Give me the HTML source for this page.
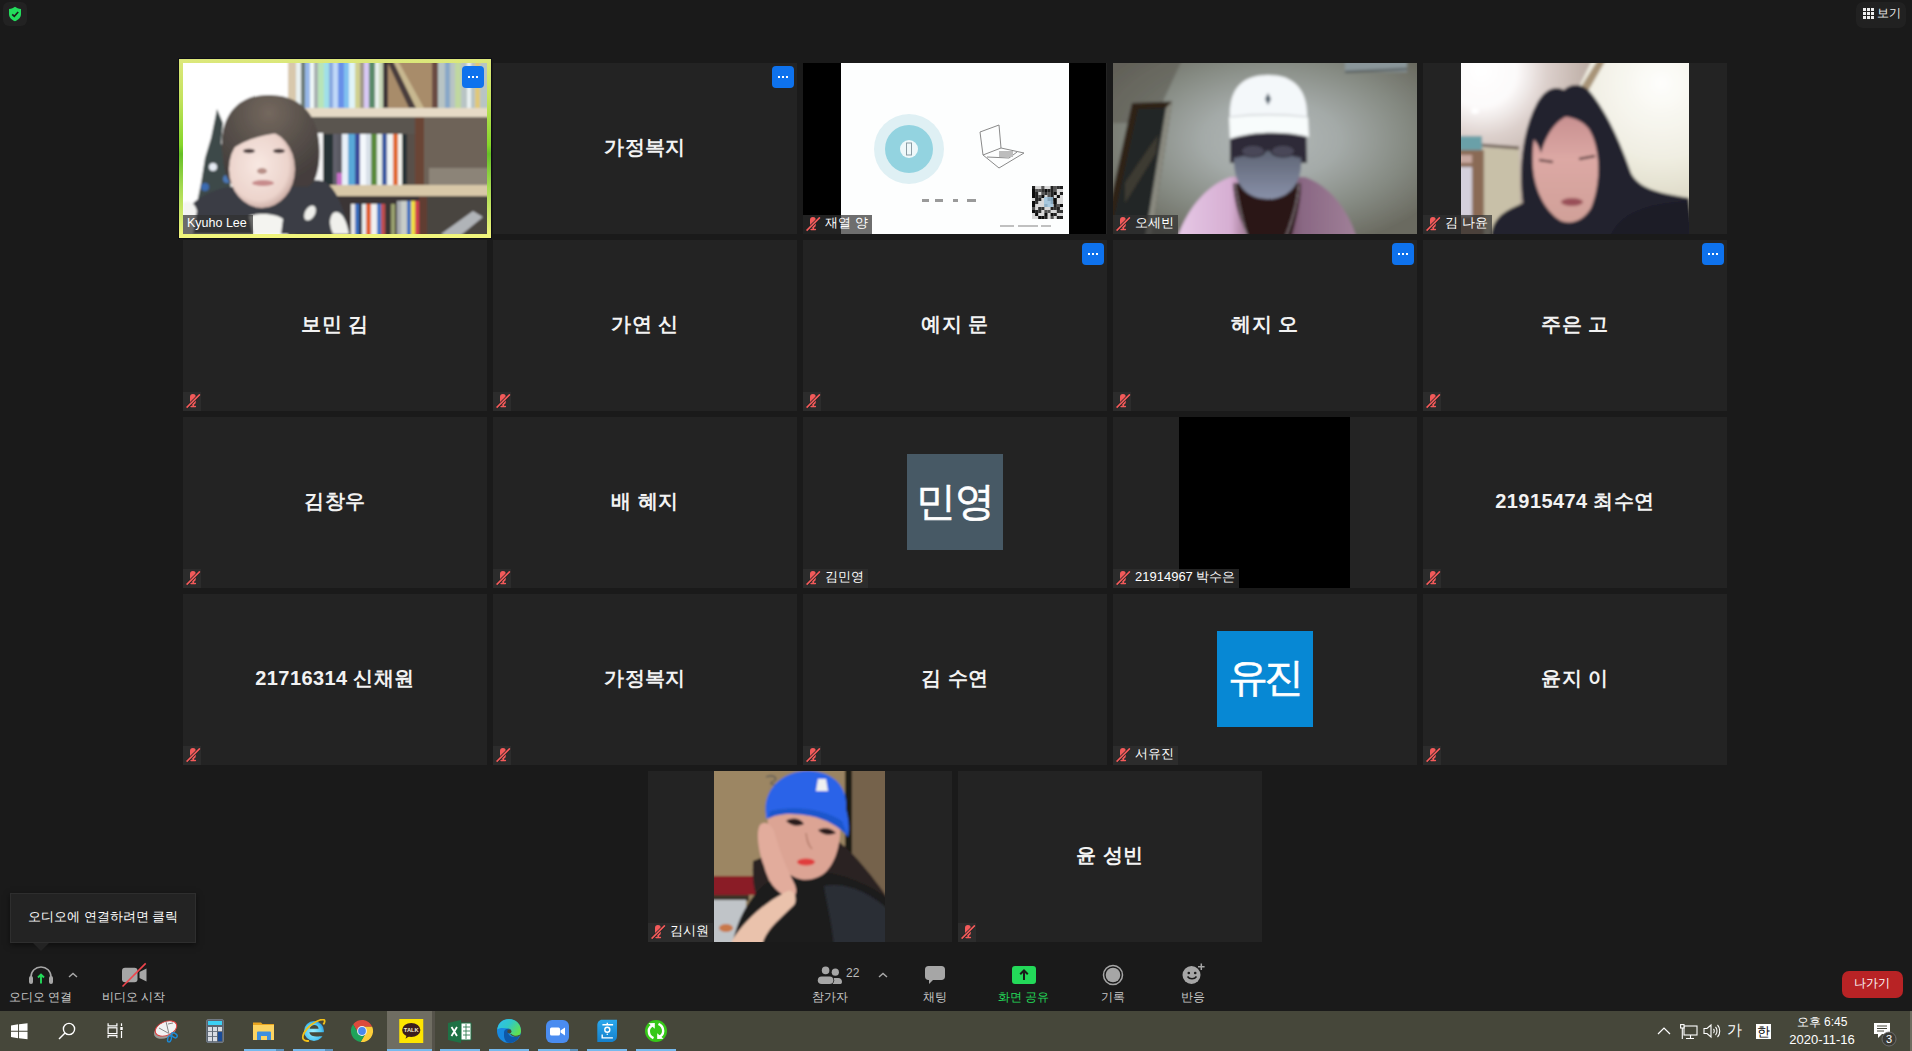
<!DOCTYPE html>
<html><head><meta charset="utf-8">
<style>
html,body{margin:0;padding:0;width:1912px;height:1051px;overflow:hidden;background:#1a1a1a;font-family:"Liberation Sans",sans-serif;}
.a{position:absolute}
.t{position:absolute;width:304px;height:171px;background:#232323;overflow:hidden}
.nm{position:absolute;left:0;right:0;top:72px;text-align:center;color:#f2f2f2;font-size:20px;font-weight:bold;line-height:24px;letter-spacing:0.4px}
.mic{position:absolute;left:0;top:152px;width:18px;height:19px;background:rgba(48,48,48,.7)}
.lbl{position:absolute;left:0;top:152px;height:19px;background:rgba(48,48,48,.7);color:#fff;font-size:13px;line-height:16px;padding:0 4px 0 22px;white-space:nowrap}
.more{position:absolute;left:279px;top:3px;width:22px;height:22px;border-radius:4px;background:#0e72ed}
.more:after{content:"";position:absolute;left:6px;top:10px;width:2px;height:2px;background:#fff;box-shadow:4px 0 #fff,8px 0 #fff}
.lb{font-size:12px;line-height:18px;color:#c8c8c8;white-space:nowrap}
.mi{position:absolute;left:3px;top:2px;width:15px;height:15px}
</style></head><body>
<div class="a" style="left:179px;top:59px;width:312px;height:179px;background:linear-gradient(#dde87c 0%,#c4e25e 22%,#86d62a 48%,#66bf26 53%,#a6da52 72%,#f4f67e 100%);box-shadow:0 0 0 1px #0e0e16"></div>
<div class="t" style="left:183px;top:63px"><svg class="a" style="left:0;top:0" width="304" height="171" viewBox="0 0 304 171">
<defs><filter id="bk" x="-5%" y="-5%" width="110%" height="110%"><feGaussianBlur stdDeviation="0.9"/></filter>
<radialGradient id="kf" cx="0.45" cy="0.45" r="0.6"><stop offset="0" stop-color="#f8e8e2"/><stop offset="0.75" stop-color="#ecd4cc"/><stop offset="1" stop-color="#c0a098"/></radialGradient><radialGradient id="kh" gradientUnits="userSpaceOnUse" cx="86" cy="50" r="70"><stop offset="0" stop-color="#74685e"/><stop offset="0.5" stop-color="#5a524c"/><stop offset="1" stop-color="#443e3c"/></radialGradient></defs>
<rect x="0" y="0" width="304" height="171" fill="#ffffff"/>
<g filter="url(#bk)">
<rect x="-6" y="-6" width="316" height="183" fill="#ffffff"/>
<rect x="105" y="-6" width="205" height="183" fill="#5a5048"/>
<rect x="105" y="-6" width="8" height="177" fill="#d8c8ac"/>
<g>
<rect x="113" y="-6" width="5" height="51" fill="#e8f0f0"/><rect x="118" y="-6" width="4" height="51" fill="#6a7a74"/><rect x="122" y="-6" width="5" height="51" fill="#98b8e8"/><rect x="127" y="-6" width="4" height="51" fill="#f0f8f8"/><rect x="131" y="-6" width="4" height="51" fill="#a8b0b0"/><rect x="135" y="-6" width="6" height="51" fill="#b8e4b8"/><rect x="141" y="-6" width="5" height="51" fill="#a0e0e8"/><rect x="146" y="-6" width="4" height="51" fill="#88a8e0"/><rect x="150" y="-6" width="5" height="51" fill="#c0d8f8"/><rect x="155" y="-6" width="6" height="51" fill="#6890e8"/><rect x="161" y="-6" width="5" height="51" fill="#80c0f0"/><rect x="166" y="-6" width="6" height="51" fill="#e0f4f8"/><rect x="172" y="-6" width="5" height="51" fill="#d0d090"/><rect x="177" y="-6" width="4" height="51" fill="#a09888"/><rect x="181" y="-6" width="5" height="51" fill="#d8c8f4"/><rect x="186" y="-6" width="6" height="51" fill="#5a8a6a"/><rect x="192" y="-6" width="4" height="51" fill="#e8f0ec"/><rect x="196" y="-6" width="4" height="51" fill="#c8d8b8"/><rect x="200" y="-6" width="5" height="51" fill="#3e3438"/>
<rect x="205" y="-6" width="46" height="51" fill="#a88c6a"/><path d="M204 -2 L210 -4 L238 45 L226 45Z" fill="#4a3e3c"/><path d="M209 -4 L214 -4 L241 45 L233 45Z" fill="#c8b890"/>
<rect x="249" y="-6" width="6" height="51" fill="#6a4c42"/>
<rect x="255" y="-6" width="55" height="51" fill="#b8c4c4"/><rect x="262" y="-6" width="5" height="51" fill="#88a8c8"/><rect x="272" y="-6" width="6" height="51" fill="#c0d8a0"/><rect x="284" y="-6" width="4" height="51" fill="#e8f0f0"/><rect x="292" y="-6" width="5" height="51" fill="#e0c878"/>
</g>
<rect x="105" y="45" width="205" height="9" fill="#e6dac6"/>
<rect x="113" y="54" width="197" height="17" fill="#5a5450"/>
<g>
<rect x="113" y="71" width="15" height="52" fill="#4a4440"/>
<rect x="128" y="71" width="22" height="52" fill="#283034"/><rect x="134" y="95" width="6" height="14" fill="#f0f0d8"/>
<rect x="150" y="71" width="4" height="52" fill="#60606a"/><rect x="154" y="110" width="5" height="13" fill="#c870c8"/><rect x="154" y="71" width="5" height="39" fill="#5a5a64"/>
<rect x="159" y="71" width="6" height="52" fill="#e8f0f8"/><rect x="165" y="71" width="7" height="52" fill="#58a8d8"/><rect x="172" y="71" width="5" height="52" fill="#3a4a98"/><rect x="177" y="71" width="6" height="52" fill="#f4f8fc"/><rect x="183" y="71" width="5" height="52" fill="#d8e0e8"/><rect x="188" y="71" width="6" height="52" fill="#5a8a3a"/><rect x="194" y="71" width="5" height="52" fill="#e8f0e8"/><rect x="199" y="71" width="5" height="52" fill="#3a5aa0"/><rect x="204" y="71" width="6" height="52" fill="#f0f4f4"/><rect x="210" y="71" width="5" height="52" fill="#e06a30"/><rect x="215" y="71" width="4" height="52" fill="#f4f4ee"/><rect x="219" y="71" width="5" height="52" fill="#283034"/><rect x="224" y="71" width="8" height="52" fill="#58504a"/>
</g>
<rect x="232" y="54" width="9" height="70" fill="#6a4436"/>
<rect x="241" y="54" width="69" height="69" fill="#6e6458"/>
<rect x="246" y="105" width="60" height="18" fill="#8c8478"/>
<rect x="105" y="122" width="205" height="11" fill="#d8c8a8"/>
<rect x="113" y="133" width="197" height="44" fill="#3a3634"/>
<g>
<rect x="168" y="141" width="4" height="36" fill="#e8e8e8"/><rect x="172" y="141" width="4" height="36" fill="#3a70c0"/><rect x="176" y="141" width="3" height="36" fill="#282830"/><rect x="179" y="141" width="4" height="36" fill="#e8eef0"/><rect x="183" y="141" width="5" height="36" fill="#e06030"/><rect x="188" y="141" width="6" height="36" fill="#f0f0f0"/><rect x="194" y="141" width="4" height="36" fill="#3a78c8"/><rect x="198" y="141" width="4" height="36" fill="#c05050"/><rect x="208" y="141" width="4" height="36" fill="#9aa070"/><rect x="214" y="138" width="4" height="39" fill="#a8acb0"/><rect x="218" y="138" width="6" height="39" fill="#c8ccc8"/><rect x="224" y="138" width="4" height="39" fill="#3a70c0"/><rect x="228" y="138" width="4" height="39" fill="#f0e040"/><rect x="232" y="138" width="4" height="39" fill="#d04050"/>
</g>
<rect x="236" y="133" width="8" height="44" fill="#603c30"/>
<rect x="244" y="133" width="66" height="44" fill="#4a4440"/>
<path d="M258 171 L290 148 L300 154 L272 177Z" fill="#b0b4b8"/>
<rect x="130" y="70" width="10" height="52" fill="#f4f4f4"/>
<path d="M34 46 L40 60 L38 80 L46 100 L48 130 L50 171 L8 171 L12 150 L18 120 L22 95 L28 75 Z" fill="#3e4a48"/>
<circle cx="22" cy="124" r="4" fill="#3a6ab0"/><circle cx="44" cy="116" r="4" fill="#4a78b8"/><circle cx="30" cy="104" r="4" fill="#e6ecf4"/><circle cx="36" cy="146" r="8" fill="#f0f4f8"/><circle cx="16" cy="150" r="4" fill="#3a6ab0"/>
<path d="M0 171 L6 145 C12 136 28 127 45 124 L110 120 C125 117 136 116 143 119 C152 126 160 140 167 171Z" fill="#3a3c44"/>
<path d="M40 95 C34 60 50 30 88 32 C124 33 140 60 136 100 C134 115 130 122 124 124 L50 122 C44 118 41 108 40 95Z" fill="url(#kh)"/>

<ellipse cx="79" cy="106" rx="33" ry="39" fill="url(#kf)"/>
<path d="M44 90 C46 55 70 45 95 48 C120 50 132 70 128 96 C120 80 110 72 95 70 C80 72 60 76 44 90Z" fill="url(#kh)"/>
<ellipse cx="66" cy="88" rx="6" ry="2.2" fill="#4a3a3a"/><ellipse cx="96" cy="88" rx="6" ry="2.2" fill="#4a3a3a"/>
<ellipse cx="79" cy="108" rx="5" ry="3" fill="#b89088"/>
<ellipse cx="80" cy="120" rx="11" ry="3" fill="#c88c8c"/>
<path d="M66 153 C76 150 92 150 100 156 L98 171 L70 171Z" fill="#f4f4f0"/>
<ellipse cx="127" cy="150" rx="5" ry="8" transform="rotate(30 127 150)" fill="#eeeeea"/>
<path d="M150 150 C158 145 164 158 166 171 L150 171 C146 162 146 155 150 150Z" fill="#f0f0ec"/>
<path d="M0 171 L0 140 C6 136 12 140 14 148 L10 171Z" fill="#f4f4f2"/>
</g>
</svg>
<div class="lbl" style="padding-left:4px;padding-right:6px;font-size:12.5px;background:rgba(48,48,48,.7)">Kyuho Lee</div><div class="more"></div></div>
<div class="t" style="left:493px;top:63px"><div class="nm">가정복지</div><div class="more"></div></div>
<div class="t" style="left:803px;top:63px"><svg class="a" style="left:0;top:0" width="303" height="171" viewBox="0 0 303 171">
<defs><filter id="sl" x="-5%" y="-5%" width="110%" height="110%"><feGaussianBlur stdDeviation="0.7"/></filter></defs>
<rect width="304" height="171" fill="#000"/>
<g filter="url(#sl)">
<rect x="38" y="0" width="228" height="171" fill="#fdfefe"/>
<circle cx="106" cy="86" r="35" fill="#dff0f4"/>
<circle cx="106" cy="86" r="24" fill="#93d3e0"/>
<circle cx="106" cy="86" r="9" fill="#eef8fa"/>
<rect x="103.5" y="80" width="5" height="12" fill="none" stroke="#8a9ca4" stroke-width="1"/>
<g stroke="#8a8a8a" stroke-width="1" fill="none"><path d="M177 69 L196 62 L198 85 L180 92Z"/><path d="M180 92 L196 105 L221 90 L198 85"/><path d="M184 94 L206 95 L214 89"/></g>
<g fill="#9a9a9a"><rect x="196" y="88" width="14" height="6" fill="#bdbdbd"/></g>
<rect x="229" y="123" width="31" height="33" fill="#d8d8d8"/><rect x="229.0" y="123.0" width="3.1" height="3" fill="#222"/><rect x="229.0" y="126.0" width="3.1" height="3" fill="#111"/><rect x="229.0" y="129.0" width="3.1" height="3" fill="#111"/><rect x="229.0" y="132.0" width="3.1" height="3" fill="#111"/><rect x="229.0" y="138.0" width="3.1" height="3" fill="#111"/><rect x="229.0" y="141.0" width="3.1" height="3" fill="#111"/><rect x="229.0" y="144.0" width="3.1" height="3" fill="#555"/><rect x="229.0" y="147.0" width="3.1" height="3" fill="#111"/><rect x="232.1" y="126.0" width="3.1" height="3" fill="#555"/><rect x="232.1" y="129.0" width="3.1" height="3" fill="#222"/><rect x="232.1" y="132.0" width="3.1" height="3" fill="#222"/><rect x="232.1" y="135.0" width="3.1" height="3" fill="#222"/><rect x="232.1" y="138.0" width="3.1" height="3" fill="#333"/><rect x="232.1" y="147.0" width="3.1" height="3" fill="#222"/><rect x="232.1" y="150.0" width="3.1" height="3" fill="#111"/><rect x="235.2" y="126.0" width="3.1" height="3" fill="#555"/><rect x="235.2" y="132.0" width="3.1" height="3" fill="#555"/><rect x="235.2" y="135.0" width="3.1" height="3" fill="#222"/><rect x="235.2" y="144.0" width="3.1" height="3" fill="#333"/><rect x="235.2" y="147.0" width="3.1" height="3" fill="#333"/><rect x="235.2" y="153.0" width="3.1" height="3" fill="#111"/><rect x="238.3" y="123.0" width="3.1" height="3" fill="#555"/><rect x="238.3" y="126.0" width="3.1" height="3" fill="#333"/><rect x="238.3" y="129.0" width="3.1" height="3" fill="#555"/><rect x="238.3" y="132.0" width="3.1" height="3" fill="#111"/><rect x="238.3" y="144.0" width="3.1" height="3" fill="#333"/><rect x="238.3" y="153.0" width="3.1" height="3" fill="#111"/><rect x="241.4" y="126.0" width="3.1" height="3" fill="#111"/><rect x="241.4" y="129.0" width="3.1" height="3" fill="#333"/><rect x="241.4" y="141.0" width="3.1" height="3" fill="#555"/><rect x="241.4" y="147.0" width="3.1" height="3" fill="#555"/><rect x="241.4" y="150.0" width="3.1" height="3" fill="#111"/><rect x="241.4" y="153.0" width="3.1" height="3" fill="#222"/><rect x="244.5" y="126.0" width="3.1" height="3" fill="#222"/><rect x="244.5" y="129.0" width="3.1" height="3" fill="#555"/><rect x="244.5" y="132.0" width="3.1" height="3" fill="#555"/><rect x="244.5" y="135.0" width="3.1" height="3" fill="#333"/><rect x="244.5" y="147.0" width="3.1" height="3" fill="#555"/><rect x="247.6" y="123.0" width="3.1" height="3" fill="#222"/><rect x="247.6" y="126.0" width="3.1" height="3" fill="#222"/><rect x="247.6" y="129.0" width="3.1" height="3" fill="#222"/><rect x="247.6" y="132.0" width="3.1" height="3" fill="#222"/><rect x="247.6" y="135.0" width="3.1" height="3" fill="#111"/><rect x="247.6" y="138.0" width="3.1" height="3" fill="#333"/><rect x="247.6" y="144.0" width="3.1" height="3" fill="#222"/><rect x="247.6" y="150.0" width="3.1" height="3" fill="#111"/><rect x="247.6" y="153.0" width="3.1" height="3" fill="#555"/><rect x="250.7" y="123.0" width="3.1" height="3" fill="#555"/><rect x="250.7" y="126.0" width="3.1" height="3" fill="#555"/><rect x="250.7" y="129.0" width="3.1" height="3" fill="#111"/><rect x="250.7" y="135.0" width="3.1" height="3" fill="#111"/><rect x="250.7" y="138.0" width="3.1" height="3" fill="#111"/><rect x="250.7" y="141.0" width="3.1" height="3" fill="#222"/><rect x="250.7" y="144.0" width="3.1" height="3" fill="#333"/><rect x="250.7" y="150.0" width="3.1" height="3" fill="#222"/><rect x="253.8" y="123.0" width="3.1" height="3" fill="#333"/><rect x="253.8" y="132.0" width="3.1" height="3" fill="#111"/><rect x="253.8" y="141.0" width="3.1" height="3" fill="#555"/><rect x="253.8" y="144.0" width="3.1" height="3" fill="#222"/><rect x="253.8" y="147.0" width="3.1" height="3" fill="#333"/><rect x="253.8" y="153.0" width="3.1" height="3" fill="#222"/><rect x="256.9" y="123.0" width="3.1" height="3" fill="#222"/><rect x="256.9" y="129.0" width="3.1" height="3" fill="#222"/><rect x="256.9" y="141.0" width="3.1" height="3" fill="#111"/><rect x="256.9" y="147.0" width="3.1" height="3" fill="#333"/><rect x="256.9" y="153.0" width="3.1" height="3" fill="#222"/><rect x="241" y="134" width="9" height="10" fill="#9cc4e0" opacity="0.8"/>
<g fill="#9a9a9a"><rect x="119" y="136" width="7" height="3"/><rect x="132" y="136" width="8" height="3"/><rect x="150" y="136" width="5" height="3"/><rect x="164" y="136" width="9" height="3"/></g>
<g fill="#c0c0c0"><rect x="197" y="162" width="14" height="2"/><rect x="215" y="162" width="20" height="2"/><rect x="238" y="162" width="10" height="2"/></g>
</g>
</svg>
<div class="lbl"><svg class="mi" viewBox="0 0 15 15"><rect x="4" y="0" width="5.8" height="10.6" rx="2.9" fill="#f35a5a"/><rect x="4.3" y="11.7" width="5.8" height="1.5" rx="0.7" fill="#f35a5a"/><rect x="6.4" y="10" width="1.6" height="2" fill="#f35a5a"/><path d="M0.6 13.6 L13.9 0.4" stroke="#1d2222" stroke-width="3"/><path d="M0.6 13.6 L13.9 0.4" stroke="#f35a5a" stroke-width="1.7"/></svg>재열 양</div></div>
<div class="t" style="left:1113px;top:63px"><svg class="a" style="left:0;top:0" width="304" height="171" viewBox="0 0 304 171">
<defs><filter id="ob" x="-5%" y="-5%" width="110%" height="110%"><feGaussianBlur stdDeviation="1.6"/></filter>
<radialGradient id="ow" cx="0.52" cy="0.45" r="0.62"><stop offset="0" stop-color="#b2b8b8"/><stop offset="0.35" stop-color="#a4aaa8"/><stop offset="0.7" stop-color="#858a82"/><stop offset="1" stop-color="#6a6a60"/></radialGradient>
<linearGradient id="osh" x1="0" y1="0" x2="1" y2="0"><stop offset="0" stop-color="#e6c8e6"/><stop offset="0.3" stop-color="#d6aed2"/><stop offset="0.5" stop-color="#5a3444"/><stop offset="0.7" stop-color="#8a6884"/><stop offset="1" stop-color="#a08098"/></linearGradient>
<linearGradient id="omk" x1="0" y1="0" x2="0" y2="1"><stop offset="0" stop-color="#5e6474"/><stop offset="1" stop-color="#8890a8"/></linearGradient></defs>
<rect x="0" y="0" width="304" height="171" fill="#858a82"/>
<g filter="url(#ob)">
<rect x="-5" y="-5" width="314" height="181" fill="url(#ow)"/>
<path d="M-5 -5 L70 -5 L40 60 L-5 60Z" fill="#5e5c54" opacity="0.6"/>
<rect x="232" y="-3" width="62" height="12" fill="#8a969a"/>
<path d="M232 9 L294 6" stroke="#4e5456" stroke-width="2"/>
<path d="M19 40 L59 38.5 L38 176 L-5 176 L-5 150Z" fill="#2e2214"/>
<path d="M25 46 L53 45 L35 176 L2 176 L2 150Z" fill="#242628"/>
<path d="M12 120 L45 72 L43 90 L12 140Z" fill="#3e3a30"/>
<path d="M53 45 L59 38.5 L38 176 L32 176Z" fill="#8a8a80"/>
<path d="M64 176 C72 150 92 122 118 114 L192 114 C215 122 235 145 244 176Z" fill="url(#osh)"/>
<path d="M120 120 C122 150 132 165 135 176 L178 176 C182 160 188 140 188 120Z" fill="#2a1418"/>
<path d="M117 58 L193 58 L194 100 L117 100Z" fill="#2e2a38"/>
<path d="M121 95 C135 92 145 89 155 88 C165 89 175 92 188 95 C190 118 178 136 155 136 C132 136 120 120 121 95Z" fill="url(#omk)"/>
<ellipse cx="140" cy="88" rx="12" ry="6" fill="#4a4658" stroke="#22202a" stroke-width="1.2"/>
<ellipse cx="170" cy="88" rx="12" ry="6" fill="#4a4658" stroke="#22202a" stroke-width="1.2"/>
<path d="M117 56 C115 25 130 12 155 12 C180 12 195 25 194 56Z" fill="#f4f8fa"/>
<path d="M116 54 C140 50 170 50 195 54 L196 74 C172 68 140 68 117 76Z" fill="#f8fcfc"/>
<path d="M117 54 C140 51 170 51 195 54" stroke="#c8ccd0" stroke-width="1.2" fill="none"/>
<path d="M155 30 L158 36 L155 42 L152 36Z" fill="#4a5a66"/>
<path d="M122 120 C125 140 130 160 135 176 M186 120 C185 140 178 160 172 176" stroke="#c8c0c8" stroke-width="0.8" fill="none"/>
</g>
</svg>
<div class="lbl"><svg class="mi" viewBox="0 0 15 15"><rect x="4" y="0" width="5.8" height="10.6" rx="2.9" fill="#f35a5a"/><rect x="4.3" y="11.7" width="5.8" height="1.5" rx="0.7" fill="#f35a5a"/><rect x="6.4" y="10" width="1.6" height="2" fill="#f35a5a"/><path d="M0.6 13.6 L13.9 0.4" stroke="#1d2222" stroke-width="3"/><path d="M0.6 13.6 L13.9 0.4" stroke="#f35a5a" stroke-width="1.7"/></svg>오세빈</div></div>
<div class="t" style="left:1423px;top:63px"><svg class="a" style="left:38px;top:0" width="228" height="171" viewBox="0 0 228 171">
<defs><filter id="nb" x="-5%" y="-5%" width="110%" height="110%"><feGaussianBlur stdDeviation="1.6"/></filter>
<radialGradient id="nl" gradientUnits="userSpaceOnUse" cx="20" cy="8" r="120"><stop offset="0" stop-color="#ffffff"/><stop offset="0.3" stop-color="#fcfafa"/><stop offset="0.55" stop-color="#dcd0cc"/><stop offset="1" stop-color="#b4a49a"/></radialGradient>
<radialGradient id="nw" gradientUnits="userSpaceOnUse" cx="200" cy="20" r="150"><stop offset="0" stop-color="#fefefc"/><stop offset="0.5" stop-color="#f0eee2"/><stop offset="1" stop-color="#d0ccb4"/></radialGradient>
<linearGradient id="nf" x1="0" y1="0" x2="0" y2="1"><stop offset="0" stop-color="#c89090"/><stop offset="0.4" stop-color="#dca8a4"/><stop offset="1" stop-color="#d0a098"/></linearGradient></defs>
<rect x="0" y="0" width="228" height="171" fill="#dcd0cc"/>
<g filter="url(#nb)">
<rect x="-5" y="-5" width="238" height="181" fill="url(#nl)"/>
<path d="M132 -5 L233 -5 L233 176 L120 176 L110 40Z" fill="url(#nw)"/>
<path d="M138 -5 L146 -5 L126 30 L118 27Z" fill="#a89478"/>
<path d="M-5 84 L58 86 L60 176 L-5 176Z" fill="#c8c0a8"/>
<path d="M18 82 L58 85" stroke="#6e6054" stroke-width="3"/>
<rect x="-5" y="73" width="26" height="14" fill="#6aa0a8"/>
<rect x="-5" y="87" width="28" height="89" fill="#8a6a54"/>
<rect x="-3" y="92" width="14" height="8" fill="#c8a8a0"/><rect x="-3" y="104" width="14" height="50" fill="#d4d0dc"/>
<ellipse cx="14" cy="48" rx="4" ry="3" fill="#fff"/>
<path d="M30 171 C34 150 50 146 62 140 C58 110 60 70 76 40 C84 26 94 22 103 27 C110 20 122 20 130 30 C145 48 160 80 170 110 C178 125 195 130 228 135 L233 176 L30 176Z" fill="#22222e"/>
<path d="M74 70 C78 52 112 46 128 66 C140 86 140 120 130 145 C122 158 110 162 100 158 C86 150 74 130 72 105 C71 92 72 80 74 70Z" fill="url(#nf)"/>
<path d="M70 72 C80 45 105 35 125 50 C110 48 90 55 80 90 C78 82 74 78 70 72Z" fill="#22222e"/>
<path d="M128 60 C140 80 145 120 138 171 L150 171 C155 120 150 80 135 55Z" fill="#22222e"/>
<path d="M78 97 L92 99 M118 96 L134 93" stroke="#3a2024" stroke-width="2.2"/>

<ellipse cx="111" cy="139" rx="11" ry="4" fill="#9a5058"/>
<path d="M150 171 C160 150 185 140 228 138 L228 176 L150 176Z" fill="#1e1c28"/>
</g>
</svg>
<div class="lbl"><svg class="mi" viewBox="0 0 15 15"><rect x="4" y="0" width="5.8" height="10.6" rx="2.9" fill="#f35a5a"/><rect x="4.3" y="11.7" width="5.8" height="1.5" rx="0.7" fill="#f35a5a"/><rect x="6.4" y="10" width="1.6" height="2" fill="#f35a5a"/><path d="M0.6 13.6 L13.9 0.4" stroke="#1d2222" stroke-width="3"/><path d="M0.6 13.6 L13.9 0.4" stroke="#f35a5a" stroke-width="1.7"/></svg>김 나윤</div></div>
<div class="t" style="left:183px;top:240px"><div class="nm">보민 김</div><div class="mic"><svg class="mi" viewBox="0 0 15 15"><rect x="4" y="0" width="5.8" height="10.6" rx="2.9" fill="#f35a5a"/><rect x="4.3" y="11.7" width="5.8" height="1.5" rx="0.7" fill="#f35a5a"/><rect x="6.4" y="10" width="1.6" height="2" fill="#f35a5a"/><path d="M0.6 13.6 L13.9 0.4" stroke="#1d2222" stroke-width="3"/><path d="M0.6 13.6 L13.9 0.4" stroke="#f35a5a" stroke-width="1.7"/></svg></div></div>
<div class="t" style="left:493px;top:240px"><div class="nm">가연 신</div><div class="mic"><svg class="mi" viewBox="0 0 15 15"><rect x="4" y="0" width="5.8" height="10.6" rx="2.9" fill="#f35a5a"/><rect x="4.3" y="11.7" width="5.8" height="1.5" rx="0.7" fill="#f35a5a"/><rect x="6.4" y="10" width="1.6" height="2" fill="#f35a5a"/><path d="M0.6 13.6 L13.9 0.4" stroke="#1d2222" stroke-width="3"/><path d="M0.6 13.6 L13.9 0.4" stroke="#f35a5a" stroke-width="1.7"/></svg></div></div>
<div class="t" style="left:803px;top:240px"><div class="nm">예지 문</div><div class="mic"><svg class="mi" viewBox="0 0 15 15"><rect x="4" y="0" width="5.8" height="10.6" rx="2.9" fill="#f35a5a"/><rect x="4.3" y="11.7" width="5.8" height="1.5" rx="0.7" fill="#f35a5a"/><rect x="6.4" y="10" width="1.6" height="2" fill="#f35a5a"/><path d="M0.6 13.6 L13.9 0.4" stroke="#1d2222" stroke-width="3"/><path d="M0.6 13.6 L13.9 0.4" stroke="#f35a5a" stroke-width="1.7"/></svg></div><div class="more"></div></div>
<div class="t" style="left:1113px;top:240px"><div class="nm">헤지 오</div><div class="mic"><svg class="mi" viewBox="0 0 15 15"><rect x="4" y="0" width="5.8" height="10.6" rx="2.9" fill="#f35a5a"/><rect x="4.3" y="11.7" width="5.8" height="1.5" rx="0.7" fill="#f35a5a"/><rect x="6.4" y="10" width="1.6" height="2" fill="#f35a5a"/><path d="M0.6 13.6 L13.9 0.4" stroke="#1d2222" stroke-width="3"/><path d="M0.6 13.6 L13.9 0.4" stroke="#f35a5a" stroke-width="1.7"/></svg></div><div class="more"></div></div>
<div class="t" style="left:1423px;top:240px"><div class="nm">주은 고</div><div class="mic"><svg class="mi" viewBox="0 0 15 15"><rect x="4" y="0" width="5.8" height="10.6" rx="2.9" fill="#f35a5a"/><rect x="4.3" y="11.7" width="5.8" height="1.5" rx="0.7" fill="#f35a5a"/><rect x="6.4" y="10" width="1.6" height="2" fill="#f35a5a"/><path d="M0.6 13.6 L13.9 0.4" stroke="#1d2222" stroke-width="3"/><path d="M0.6 13.6 L13.9 0.4" stroke="#f35a5a" stroke-width="1.7"/></svg></div><div class="more"></div></div>
<div class="t" style="left:183px;top:417px"><div class="nm">김창우</div><div class="mic"><svg class="mi" viewBox="0 0 15 15"><rect x="4" y="0" width="5.8" height="10.6" rx="2.9" fill="#f35a5a"/><rect x="4.3" y="11.7" width="5.8" height="1.5" rx="0.7" fill="#f35a5a"/><rect x="6.4" y="10" width="1.6" height="2" fill="#f35a5a"/><path d="M0.6 13.6 L13.9 0.4" stroke="#1d2222" stroke-width="3"/><path d="M0.6 13.6 L13.9 0.4" stroke="#f35a5a" stroke-width="1.7"/></svg></div></div>
<div class="t" style="left:493px;top:417px"><div class="nm">배 혜지</div><div class="mic"><svg class="mi" viewBox="0 0 15 15"><rect x="4" y="0" width="5.8" height="10.6" rx="2.9" fill="#f35a5a"/><rect x="4.3" y="11.7" width="5.8" height="1.5" rx="0.7" fill="#f35a5a"/><rect x="6.4" y="10" width="1.6" height="2" fill="#f35a5a"/><path d="M0.6 13.6 L13.9 0.4" stroke="#1d2222" stroke-width="3"/><path d="M0.6 13.6 L13.9 0.4" stroke="#f35a5a" stroke-width="1.7"/></svg></div></div>
<div class="t" style="left:803px;top:417px"><div class="a" style="left:104px;top:37px;width:96px;height:96px;background:#475965;color:#fff;font-size:40px;line-height:94px;-webkit-text-stroke:0.6px #fff;text-align:center;letter-spacing:-1px">민영</div>
<div class="lbl"><svg class="mi" viewBox="0 0 15 15"><rect x="4" y="0" width="5.8" height="10.6" rx="2.9" fill="#f35a5a"/><rect x="4.3" y="11.7" width="5.8" height="1.5" rx="0.7" fill="#f35a5a"/><rect x="6.4" y="10" width="1.6" height="2" fill="#f35a5a"/><path d="M0.6 13.6 L13.9 0.4" stroke="#1d2222" stroke-width="3"/><path d="M0.6 13.6 L13.9 0.4" stroke="#f35a5a" stroke-width="1.7"/></svg>김민영</div></div>
<div class="t" style="left:1113px;top:417px"><div class="a" style="left:66px;top:0;width:171px;height:171px;background:#000"></div><div class="lbl"><svg class="mi" viewBox="0 0 15 15"><rect x="4" y="0" width="5.8" height="10.6" rx="2.9" fill="#f35a5a"/><rect x="4.3" y="11.7" width="5.8" height="1.5" rx="0.7" fill="#f35a5a"/><rect x="6.4" y="10" width="1.6" height="2" fill="#f35a5a"/><path d="M0.6 13.6 L13.9 0.4" stroke="#1d2222" stroke-width="3"/><path d="M0.6 13.6 L13.9 0.4" stroke="#f35a5a" stroke-width="1.7"/></svg>21914967 박수은</div></div>
<div class="t" style="left:1423px;top:417px"><div class="nm">21915474 최수연</div><div class="mic"><svg class="mi" viewBox="0 0 15 15"><rect x="4" y="0" width="5.8" height="10.6" rx="2.9" fill="#f35a5a"/><rect x="4.3" y="11.7" width="5.8" height="1.5" rx="0.7" fill="#f35a5a"/><rect x="6.4" y="10" width="1.6" height="2" fill="#f35a5a"/><path d="M0.6 13.6 L13.9 0.4" stroke="#1d2222" stroke-width="3"/><path d="M0.6 13.6 L13.9 0.4" stroke="#f35a5a" stroke-width="1.7"/></svg></div></div>
<div class="t" style="left:183px;top:594px"><div class="nm">21716314 신채원</div><div class="mic"><svg class="mi" viewBox="0 0 15 15"><rect x="4" y="0" width="5.8" height="10.6" rx="2.9" fill="#f35a5a"/><rect x="4.3" y="11.7" width="5.8" height="1.5" rx="0.7" fill="#f35a5a"/><rect x="6.4" y="10" width="1.6" height="2" fill="#f35a5a"/><path d="M0.6 13.6 L13.9 0.4" stroke="#1d2222" stroke-width="3"/><path d="M0.6 13.6 L13.9 0.4" stroke="#f35a5a" stroke-width="1.7"/></svg></div></div>
<div class="t" style="left:493px;top:594px"><div class="nm">가정복지</div><div class="mic"><svg class="mi" viewBox="0 0 15 15"><rect x="4" y="0" width="5.8" height="10.6" rx="2.9" fill="#f35a5a"/><rect x="4.3" y="11.7" width="5.8" height="1.5" rx="0.7" fill="#f35a5a"/><rect x="6.4" y="10" width="1.6" height="2" fill="#f35a5a"/><path d="M0.6 13.6 L13.9 0.4" stroke="#1d2222" stroke-width="3"/><path d="M0.6 13.6 L13.9 0.4" stroke="#f35a5a" stroke-width="1.7"/></svg></div></div>
<div class="t" style="left:803px;top:594px"><div class="nm">김 수연</div><div class="mic"><svg class="mi" viewBox="0 0 15 15"><rect x="4" y="0" width="5.8" height="10.6" rx="2.9" fill="#f35a5a"/><rect x="4.3" y="11.7" width="5.8" height="1.5" rx="0.7" fill="#f35a5a"/><rect x="6.4" y="10" width="1.6" height="2" fill="#f35a5a"/><path d="M0.6 13.6 L13.9 0.4" stroke="#1d2222" stroke-width="3"/><path d="M0.6 13.6 L13.9 0.4" stroke="#f35a5a" stroke-width="1.7"/></svg></div></div>
<div class="t" style="left:1113px;top:594px"><div class="a" style="left:104px;top:37px;width:96px;height:96px;background:#0788d4;color:#fff;font-size:40px;line-height:93px;-webkit-text-stroke:0.6px #fff;text-align:center;letter-spacing:-4px;text-indent:-2px">유진</div>
<div class="lbl"><svg class="mi" viewBox="0 0 15 15"><rect x="4" y="0" width="5.8" height="10.6" rx="2.9" fill="#f35a5a"/><rect x="4.3" y="11.7" width="5.8" height="1.5" rx="0.7" fill="#f35a5a"/><rect x="6.4" y="10" width="1.6" height="2" fill="#f35a5a"/><path d="M0.6 13.6 L13.9 0.4" stroke="#1d2222" stroke-width="3"/><path d="M0.6 13.6 L13.9 0.4" stroke="#f35a5a" stroke-width="1.7"/></svg>서유진</div></div>
<div class="t" style="left:1423px;top:594px"><div class="nm">윤지 이</div><div class="mic"><svg class="mi" viewBox="0 0 15 15"><rect x="4" y="0" width="5.8" height="10.6" rx="2.9" fill="#f35a5a"/><rect x="4.3" y="11.7" width="5.8" height="1.5" rx="0.7" fill="#f35a5a"/><rect x="6.4" y="10" width="1.6" height="2" fill="#f35a5a"/><path d="M0.6 13.6 L13.9 0.4" stroke="#1d2222" stroke-width="3"/><path d="M0.6 13.6 L13.9 0.4" stroke="#f35a5a" stroke-width="1.7"/></svg></div></div>
<div class="t" style="left:648px;top:771px"><svg class="a" style="left:66px;top:0" width="171" height="171" viewBox="0 0 171 171">
<defs><filter id="sb" x="-5%" y="-5%" width="110%" height="110%"><feGaussianBlur stdDeviation="1.2"/></filter></defs>
<rect id="basesiwon" x="0" y="0" width="171" height="171" fill="#9a8462"/><g filter="url(#sb)">
<rect x="-5" y="-5" width="181" height="181" fill="#9a8462"/>
<rect x="-5" y="-5" width="60" height="120" fill="#9c8664"/>
<rect x="136" y="-5" width="40" height="181" fill="#74624c"/>
<rect x="131" y="-5" width="7" height="120" fill="#1c1a18"/>
<path d="M52 6 C60 3 66 8 58 11 C54 13 62 15 66 13" stroke="#555" stroke-width="1.2" fill="none"/>
<rect x="-5" y="105" width="50" height="19" fill="#8a1c28"/>
<rect x="-5" y="124" width="40" height="6" fill="#3a3028"/>
<rect x="-5" y="129" width="37" height="47" fill="#c0c4c8"/>
<ellipse cx="12" cy="157" rx="7" ry="4" fill="#c87848"/>
<path d="M108 60 C130 70 150 95 165 115 L176 130 L176 176 L100 176Z" fill="#2a2220"/>
<path d="M39 90 C38 110 40 125 48 135 L56 120 L52 85Z" fill="#2a2220"/>
<path d="M18 176 C22 150 35 125 55 110 L95 100 C125 100 160 115 176 130 L176 176Z" fill="#1a1a1e"/>
<path d="M110 115 C135 110 160 125 176 140 L176 176 L120 176 C118 150 112 130 110 115Z" fill="#2c2e36"/>
<path d="M54 40 C52 58 58 80 70 98 C80 110 95 112 108 104 C122 94 128 70 126 48 C115 40 80 36 54 40Z" fill="#dca494"/>
<path d="M46 54 C42 60 44 80 50 95 C54 110 60 120 76 128 C82 126 84 120 80 112 C72 95 66 82 60 60 C56 52 50 50 46 54Z" fill="#e2ac9c"/>
<path d="M18 170 C28 152 52 130 74 120 C80 118 84 128 80 134 C66 148 50 160 48 176 L18 176Z" fill="#eac2ac"/>
<path d="M72 50 C78 46 86 47 90 53 C84 56 77 55 72 50Z" fill="#2a1e1e"/><path d="M104 59 C110 56 118 57 122 62 C116 65 108 64 104 59Z" fill="#2a1e1e"/><path d="M92 62 C93 70 94 74 98 78" stroke="#b88070" stroke-width="1.5" fill="none"/>
<ellipse cx="92" cy="91" rx="9" ry="3.5" fill="#e03c3c"/>
<path d="M52 44 C48 18 70 -2 98 0 C122 2 134 18 132 38 C134 46 136 56 134 66 C126 56 118 48 100 44 C80 40 62 40 52 48Z" fill="#2a64e8"/>
<path d="M56 40 C80 34 110 38 128 50 L134 66 C126 56 112 48 96 45 C80 42 64 42 54 48Z" fill="#1f56cc"/>
<path d="M104 8 L112 8 L114 20 L102 20Z" fill="#f0f0f0"/>
</g>
</svg>
<div class="lbl"><svg class="mi" viewBox="0 0 15 15"><rect x="4" y="0" width="5.8" height="10.6" rx="2.9" fill="#f35a5a"/><rect x="4.3" y="11.7" width="5.8" height="1.5" rx="0.7" fill="#f35a5a"/><rect x="6.4" y="10" width="1.6" height="2" fill="#f35a5a"/><path d="M0.6 13.6 L13.9 0.4" stroke="#1d2222" stroke-width="3"/><path d="M0.6 13.6 L13.9 0.4" stroke="#f35a5a" stroke-width="1.7"/></svg>김시원</div></div>
<div class="t" style="left:958px;top:771px"><div class="nm">윤 성빈</div><div class="mic"><svg class="mi" viewBox="0 0 15 15"><rect x="4" y="0" width="5.8" height="10.6" rx="2.9" fill="#f35a5a"/><rect x="4.3" y="11.7" width="5.8" height="1.5" rx="0.7" fill="#f35a5a"/><rect x="6.4" y="10" width="1.6" height="2" fill="#f35a5a"/><path d="M0.6 13.6 L13.9 0.4" stroke="#1d2222" stroke-width="3"/><path d="M0.6 13.6 L13.9 0.4" stroke="#f35a5a" stroke-width="1.7"/></svg></div></div>
<!-- top icons -->
<div class="a" style="left:3px;top:2px;width:24px;height:24px;border-radius:6px;background:#222"></div>
<svg class="a" style="left:8px;top:6px" width="14" height="16" viewBox="0 0 14 16"><path d="M7 0.8 C8.5 2 10.5 2.8 13 3 V8 C13 11.5 10.3 14 7 15.3 C3.7 14 1 11.5 1 8 V3 C3.5 2.8 5.5 2 7 0.8Z" fill="#23dc5c"/><path d="M4.2 8.3 L6.3 10.3 L10.2 6" stroke="#1c1c1c" stroke-width="1.7" fill="none"/></svg>
<div class="a" style="left:1856px;top:2px;width:50px;height:26px;border-radius:7px;background:#212121"></div>
<svg class="a" style="left:1863px;top:8px" width="11" height="11" viewBox="0 0 11 11" fill="#eee"><rect x="0" y="0" width="3" height="3"/><rect x="4" y="0" width="3" height="3"/><rect x="8" y="0" width="3" height="3"/><rect x="0" y="4" width="3" height="3"/><rect x="4" y="4" width="3" height="3"/><rect x="8" y="4" width="3" height="3"/><rect x="0" y="8" width="3" height="3"/><rect x="4" y="8" width="3" height="3"/><rect x="8" y="8" width="3" height="3"/></svg>
<div class="a" style="left:1877px;top:4px;font-size:12px;line-height:18px;color:#eee">보기</div>

<!-- tooltip -->
<div class="a" style="left:10px;top:893px;width:184px;height:48px;background:#232323;border:1px solid #2e2e2e;box-shadow:0 2px 6px rgba(0,0,0,.5)"></div>
<div class="a" style="left:33px;top:943px;width:0;height:0;border-left:8px solid transparent;border-right:8px solid transparent;border-top:8px solid #232323"></div>
<div class="a" style="left:28px;top:907px;font-size:13px;line-height:20px;color:#fff;white-space:nowrap">오디오에 연결하려면 클릭</div>

<!-- toolbar -->
<svg class="a" style="left:28px;top:966px" width="26" height="20" viewBox="0 0 26 20"><path d="M3 14 V11 C3 5 7.5 1 13 1 C18.5 1 23 5 23 11 V14" stroke="#a6a6a6" stroke-width="1.6" fill="none"/><rect x="1" y="10" width="4" height="8" rx="2" fill="#a6a6a6"/><rect x="21" y="10" width="4" height="8" rx="2" fill="#a6a6a6"/><path d="M13 17.5 V8.5 M10 11.5 L13 8.5 L16 11.5" stroke="#23d959" stroke-width="1.9" fill="none"/></svg>
<svg class="a" style="left:68px;top:972px" width="10" height="6" viewBox="0 0 10 6"><path d="M1 5 L5 1.5 L9 5" stroke="#aaa" stroke-width="1.4" fill="none"/></svg>
<div class="a lb" style="left:9px;top:988px">오디오 연결</div>
<svg class="a" style="left:120px;top:962px" width="28" height="26" viewBox="0 0 28 26"><rect x="2" y="5.8" width="15.5" height="14.5" rx="3" fill="#a6a6a6"/><path d="M19.5 10 L26.5 6.5 V19.5 L19.5 16Z" fill="#a6a6a6"/><path d="M2.5 24.5 L25.7 1.4" stroke="#f0444c" stroke-width="1.6"/></svg>
<div class="a lb" style="left:102px;top:988px">비디오 시작</div>

<svg class="a" style="left:817px;top:965px" width="26" height="20" viewBox="0 0 26 20" fill="#a6a6a6"><circle cx="8.6" cy="5.4" r="3.8"/><circle cx="18.3" cy="7.2" r="3.6"/><path d="M15 13 H21.4 C23.4 13 25 14.6 25 16.5 C25 18 24.5 19 23.5 19 H15Z"/><rect x="0" y="10.8" width="17.2" height="9" rx="4.5" fill="#1a1a1a"/><rect x="0.8" y="11.5" width="15.6" height="7.6" rx="3.8"/></svg>
<div class="a" style="left:846px;top:964px;font-size:12px;line-height:18px;color:#bbb">22</div>
<svg class="a" style="left:878px;top:972px" width="10" height="6" viewBox="0 0 10 6"><path d="M1 5 L5 1.5 L9 5" stroke="#aaa" stroke-width="1.4" fill="none"/></svg>
<div class="a lb" style="left:812px;top:988px">참가자</div>

<svg class="a" style="left:923px;top:965px" width="24" height="22" viewBox="0 0 24 22"><path d="M5.5 1 H18.5 C20.7 1 22 2.3 22 4.5 V11.5 C22 13.7 20.7 15 18.5 15 H10 L6 19 V15 H5.5 C3.3 15 2 13.7 2 11.5 V4.5 C2 2.3 3.3 1 5.5 1Z" fill="#a6a6a6"/></svg>
<div class="a lb" style="left:923px;top:988px">채팅</div>

<svg class="a" style="left:1011px;top:965px" width="26" height="20" viewBox="0 0 26 20"><rect x="1" y="1" width="24" height="18" rx="3" fill="#23d959"/><path d="M13 15 V5.5 M9.2 9.3 L13 5.5 L16.8 9.3" stroke="#1a1a1a" stroke-width="2" fill="none"/></svg>
<div class="a lb" style="left:998px;top:988px;color:#23d959">화면 공유</div>

<svg class="a" style="left:1102px;top:964px" width="22" height="22" viewBox="0 0 22 22"><circle cx="11" cy="11" r="9.5" stroke="#a6a6a6" stroke-width="1.5" fill="none"/><circle cx="11" cy="11" r="7.3" fill="#a6a6a6"/></svg>
<div class="a lb" style="left:1101px;top:988px">기록</div>

<svg class="a" style="left:1181px;top:962px" width="26" height="24" viewBox="0 0 26 24"><circle cx="10.5" cy="13" r="9" fill="#a6a6a6"/><circle cx="7.8" cy="11" r="1.3" fill="#1a1a1a"/><circle cx="14.2" cy="11" r="1.3" fill="#1a1a1a"/><path d="M6.5 14.5 C8.5 17.5 13.5 17.5 15.5 14.5" stroke="#1a1a1a" stroke-width="1.5" fill="none"/><path d="M20.3 1.5 V8 M17 4.7 H23.6" stroke="#a6a6a6" stroke-width="1.5"/></svg>
<div class="a lb" style="left:1181px;top:988px">반응</div>

<div class="a" style="left:1842px;top:971px;width:61px;height:27px;border-radius:7px;background:#b82325"></div>
<div class="a" style="left:1841px;top:971px;width:61px;height:27px;line-height:25px;text-align:center;font-size:12px;color:#fff">나가기</div>

<!-- taskbar -->
<div class="a" style="left:0;top:1011px;width:1912px;height:40px;background:#46473a"></div>
<div class="a" style="left:1910px;top:1011px;width:2px;height:40px;background:#6e6c60"></div>
<!-- start -->
<svg class="a" style="left:10.5px;top:1023px" width="17" height="16.5" viewBox="0 0 18 17" fill="#fff"><path d="M0 2.3 L7.5 1.2 V8 H0Z M8.5 1.1 L17.5 0 V8 H8.5Z M0 9 H7.5 V15.8 L0 14.7Z M8.5 9 H17.5 V17 L8.5 15.9Z"/></svg>
<svg class="a" style="left:58px;top:1022px" width="18" height="18" viewBox="0 0 18 18"><circle cx="11" cy="7" r="5.6" stroke="#fff" stroke-width="1.4" fill="none"/><path d="M7 11 L1 17" stroke="#fff" stroke-width="1.5"/></svg>
<svg class="a" style="left:106px;top:1022px" width="18" height="17" viewBox="0 0 18 17" fill="none" stroke="#fff" stroke-width="1.2"><path d="M2.1 1.3 V3.8 H10.9 V1.3"/><rect x="2.1" y="5.8" width="8.8" height="5.8"/><path d="M2.1 16 V13.6 H10.9 V16"/><path d="M15.5 1.3 V4"/><rect x="14.3" y="5" width="2.4" height="3" fill="#fff" stroke="none"/><path d="M15.5 9 V16"/></svg>
<svg class="a" style="left:152px;top:1019px" width="28" height="25" viewBox="0 0 28 25"><ellipse cx="13" cy="12" rx="11.5" ry="7" transform="rotate(-22 13 12)" fill="#9a9a96"/><ellipse cx="14" cy="9.5" rx="11.3" ry="6.8" transform="rotate(-22 14 9.5)" fill="#f2f2f2" stroke="#e03a3a" stroke-width="0.9"/><path d="M7 9 L16 14 M14 2.5 L17 15 M16 5 L21 4" stroke="#6a6a6a" stroke-width="0.8" fill="none"/><ellipse cx="22.3" cy="16.3" rx="3.2" ry="2" transform="rotate(35 22.3 16.3)" stroke="#1c8ad6" stroke-width="1.4" fill="none"/><ellipse cx="17.5" cy="19.8" rx="1.8" ry="3.2" transform="rotate(15 17.5 19.8)" stroke="#1c8ad6" stroke-width="1.4" fill="none"/></svg>
<svg class="a" style="left:206px;top:1019px" width="18" height="24" viewBox="0 0 18 24"><rect x="0.5" y="0.5" width="17" height="23" rx="1.5" fill="#5c6672" stroke="#7a8490" stroke-width="0.8"/><rect x="2" y="2" width="14" height="4" fill="#3cd0f4"/><g fill="#d8dce2"><rect x="2" y="8" width="4" height="4.2"/><rect x="7" y="8" width="4" height="4.2"/><rect x="12" y="8" width="4" height="4.2"/><rect x="2" y="13" width="4" height="4.2"/><rect x="7" y="13" width="4" height="4.2"/><rect x="2" y="18" width="4" height="4.2"/><rect x="7" y="18" width="4" height="4.2"/></g><rect x="12" y="13" width="4" height="9.2" fill="#1a4c98"/></svg>
<svg class="a" style="left:253px;top:1022px" width="22" height="19" viewBox="0 0 22 19"><path d="M0 0.5 H8 L9.5 2 H21 V18 H0Z" fill="#e8a41e"/><rect x="0" y="3" width="21" height="15" fill="#fcd462"/><path d="M4 18 V10.5 Q4 9.5 5 9.5 H17 Q18 9.5 18 10.5 V18 H14 V14 H8 V18Z" fill="#3d8fe0"/></svg>
<svg class="a" style="left:301px;top:1019px" width="25" height="24" viewBox="0 0 25 24"><defs><radialGradient id="ieg" cx="0.45" cy="0.55" r="0.6"><stop offset="0" stop-color="#a0f0ff"/><stop offset="0.7" stop-color="#50c8f4"/><stop offset="1" stop-color="#2890d8"/></radialGradient></defs><circle cx="13" cy="12" r="10" fill="url(#ieg)"/><path d="M8.6 9.7 C9.3 7.3 11.5 6 13.3 6 C15.8 6 17.4 7.6 17.6 9.7Z" fill="#46473a"/><path d="M8.3 13.3 H24 V17 C21 17 19 17.3 17.5 17.4 C15.5 17.8 13 17.6 11 16.8 C9.5 16 8.6 14.8 8.3 13.3Z" fill="#46473a"/><path d="M8 21.8 C2.5 22.8 0.3 19.5 3 14 C6 8 13 3 19 1 C22.5 -0.1 24 0.6 23.6 2.8 C23.4 3.8 23 4.6 22.3 5.3" stroke="#f2c018" stroke-width="1.8" fill="none"/></svg>
<svg class="a" style="left:350px;top:1019px" width="24" height="24" viewBox="0 0 24 24"><path d="M12 7.7 H22.2 A11.1 11.1 0 0 0 3.17 5.29 L8.28 14.15 A4.3 4.3 0 0 1 12 7.7Z" fill="#dc4a3c"/><path d="M15.72 14.15 L10.6 23 A11.1 11.1 0 0 0 22.2 7.7 H12 A4.3 4.3 0 0 1 15.72 14.15Z" fill="#fcce3a"/><path d="M8.28 14.15 L3.17 5.29 A11.1 11.1 0 0 0 10.6 23 L15.72 14.15 A4.3 4.3 0 0 1 8.28 14.15Z" fill="#1ea35a"/><circle cx="12" cy="12" r="4.9" fill="#f4f4f4"/><circle cx="12" cy="12" r="3.9" fill="#4a88ee"/></svg>
<div class="a" style="left:387px;top:1011px;width:45px;height:40px;background:#6f6d62"></div>
<div class="a" style="left:432px;top:1011px;width:3px;height:40px;background:#55534a"></div>
<svg class="a" style="left:399px;top:1019px" width="24.5" height="24" viewBox="0 0 25 25"><rect width="25" height="25" fill="#fee500"/><ellipse cx="12.5" cy="11.5" rx="9.5" ry="7.3" fill="#3c1e1e"/><path d="M8 16 L6.5 20.5 L11 17.5Z" fill="#3c1e1e"/><text x="12.5" y="13.5" font-size="6" font-weight="bold" text-anchor="middle" fill="#f4ecd0" font-family="Liberation Sans">TALK</text></svg>
<svg class="a" style="left:448px;top:1020px" width="24" height="23" viewBox="0 0 24 23"><path d="M0 3 L13 0 V23 L0 20Z" fill="#1e7145"/><path d="M13 3 H23 V20 H13Z" fill="#fff" stroke="#1e7145" stroke-width="1"/><path d="M15 7 H22 M15 11 H22 M15 15 H22 M18 4 V19" stroke="#1e7145" stroke-width="0.8"/><path d="M3.5 7 L9 16 M9 7 L3.5 16" stroke="#fff" stroke-width="1.8"/></svg>
<svg class="a" style="left:497px;top:1019px" width="24" height="24" viewBox="0 0 24 24"><defs><linearGradient id="eg" x1="0" y1="0" x2="1" y2="0.6"><stop offset="0" stop-color="#30c0f0"/><stop offset="0.5" stop-color="#30c8c8"/><stop offset="1" stop-color="#60e050"/></linearGradient></defs><circle cx="12" cy="12" r="12" fill="#1888e0"/><path d="M0.3 10.5 C1 4 6 0 12 0 C19 0 24 5 24 12 C24 15.5 21.5 17.5 18.5 17.5 C15.5 17.5 13.5 16 13 14.5 C14.5 13.5 14.8 10.2 12.3 9.8 C8.5 9.3 4 8 0.3 10.5Z" fill="url(#eg)"/><path d="M7 13 C7.5 9.8 10.5 9.3 12.3 9.8 C10.8 11 10.3 13 11.8 15.5 C13.8 18.5 19 18.8 22.5 17 C20.5 21.5 16.5 24 12.5 24 C9.5 24 7 20.5 7 16.5Z" fill="#0e58a8"/><circle cx="12.4" cy="12.4" r="2.1" fill="#46473a"/><path d="M13.6 15 C15.5 17.4 19.5 18 22.8 16.3" stroke="#46473a" stroke-width="1.1" fill="none"/></svg>
<svg class="a" style="left:546px;top:1020px" width="23" height="23" viewBox="0 0 23 23"><rect width="23" height="23" rx="6" fill="#4a8cf0"/><rect x="4" y="7.5" width="10" height="8" rx="1.5" fill="#fff"/><path d="M14.5 10.5 L19 7.5 V15.5 L14.5 12.5Z" fill="#fff"/></svg>
<svg class="a" style="left:597px;top:1019px" width="21" height="24" viewBox="0 0 21 24"><defs><linearGradient id="hg" x1="0" y1="0" x2="0" y2="1"><stop offset="0" stop-color="#2aa8ee"/><stop offset="1" stop-color="#1480cc"/></linearGradient></defs><path d="M5 0.7 H20 V17 C20 20.5 17.5 23 14 23 H0.3 V6 C0.3 3 2.5 0.7 5 0.7Z" fill="url(#hg)"/><g stroke="#fff" stroke-width="1.4" fill="none"><path d="M10.3 3.8 V5.8 M5.4 5.8 H16.1"/><circle cx="10.3" cy="10.7" r="2.5"/><path d="M5.2 15.6 V18.9 H15.9"/></g><circle cx="10.3" cy="15.3" r="0.8" fill="#fff"/></svg>
<svg class="a" style="left:645px;top:1020px" width="22" height="22" viewBox="0 0 22 22"><circle cx="11" cy="11" r="11" fill="#36c818"/><g stroke="#fff" stroke-width="2.4" fill="none"><path d="M9 4.8 C5.5 5.8 3.8 8.2 3.8 11 C3.8 14 5.5 16.8 8.5 18.2"/><path d="M13 17.2 C16.5 16.2 18.2 13.8 18.2 11 C18.2 8 16.5 5.2 13.5 3.8"/></g><path d="M3.5 3.2 L9.8 3 L9.8 8.8Z M18.5 18.8 L12.2 19 L12.2 13.2Z" fill="#fff"/></svg>
<!-- underlines -->
<div class="a" style="left:244px;top:1049px;width:32px;height:2px;background:#76b9ed"></div><div class="a" style="left:276px;top:1049px;width:8px;height:2px;background:#5a8fb8"></div><div class="a" style="left:293px;top:1049px;width:32px;height:2px;background:#76b9ed"></div><div class="a" style="left:325px;top:1049px;width:8px;height:2px;background:#5a8fb8"></div><div class="a" style="left:387px;top:1049px;width:45px;height:2px;background:#76b9ed"></div><div class="a" style="left:440px;top:1049px;width:40px;height:2px;background:#76b9ed"></div><div class="a" style="left:489px;top:1049px;width:40px;height:2px;background:#76b9ed"></div><div class="a" style="left:538px;top:1049px;width:32px;height:2px;background:#76b9ed"></div><div class="a" style="left:570px;top:1049px;width:8px;height:2px;background:#5a8fb8"></div><div class="a" style="left:587px;top:1049px;width:40px;height:2px;background:#76b9ed"></div><div class="a" style="left:636px;top:1049px;width:40px;height:2px;background:#76b9ed"></div>
<!-- tray -->
<svg class="a" style="left:1657px;top:1026px" width="14" height="9" viewBox="0 0 14 9"><path d="M1 8 L7 2 L13 8" stroke="#fff" stroke-width="1.2" fill="none"/></svg>
<svg class="a" style="left:1680px;top:1024px" width="18" height="16" viewBox="0 0 18 16" fill="none" stroke="#fff" stroke-width="1.1"><rect x="4" y="2" width="13" height="9"/><path d="M10.5 11 V14 M6 14.5 H14"/><rect x="0.6" y="0.6" width="3.4" height="3.4" fill="#46473a"/><path d="M2.3 4 V15"/></svg>
<svg class="a" style="left:1703px;top:1023px" width="18" height="16" viewBox="0 0 18 16" fill="none" stroke="#fff" stroke-width="1.1"><path d="M1 5.5 H4 L8 2 V14 L4 10.5 H1Z"/><path d="M10.5 6 C11.5 7 11.5 9 10.5 10 M12.5 4 C14.5 6 14.5 10 12.5 12 M14.5 2 C17.5 5 17.5 11 14.5 14"/></svg>
<div class="a" style="left:1727px;top:1020px;font-size:15px;line-height:20px;color:#fff">가</div>
<div class="a" style="left:1756px;top:1024px;width:15px;height:15px;background:#fff;color:#000;font-size:13px;line-height:15px;text-align:center">한</div>
<div class="a" style="left:1779px;top:1013px;width:86px;text-align:center;font-size:12px;line-height:18px;color:#fff">오후 6:45</div>
<div class="a" style="left:1779px;top:1031px;width:86px;text-align:center;font-size:13px;line-height:18px;color:#fff">2020-11-16</div>
<svg class="a" style="left:1873px;top:1022px" width="28" height="27" viewBox="0 0 28 27"><path d="M1 1 H17 V12 H9 L5 16 V12 H1Z" fill="#fff"/><path d="M4 4 H14 M4 6.5 H14 M4 9 H11" stroke="#46473a" stroke-width="1"/><circle cx="16" cy="17" r="7" fill="#3b3b36" stroke="#777" stroke-width="0.8"/><text x="16" y="21" font-size="11" text-anchor="middle" fill="#fff" font-family="Liberation Sans">3</text></svg>

</body></html>
